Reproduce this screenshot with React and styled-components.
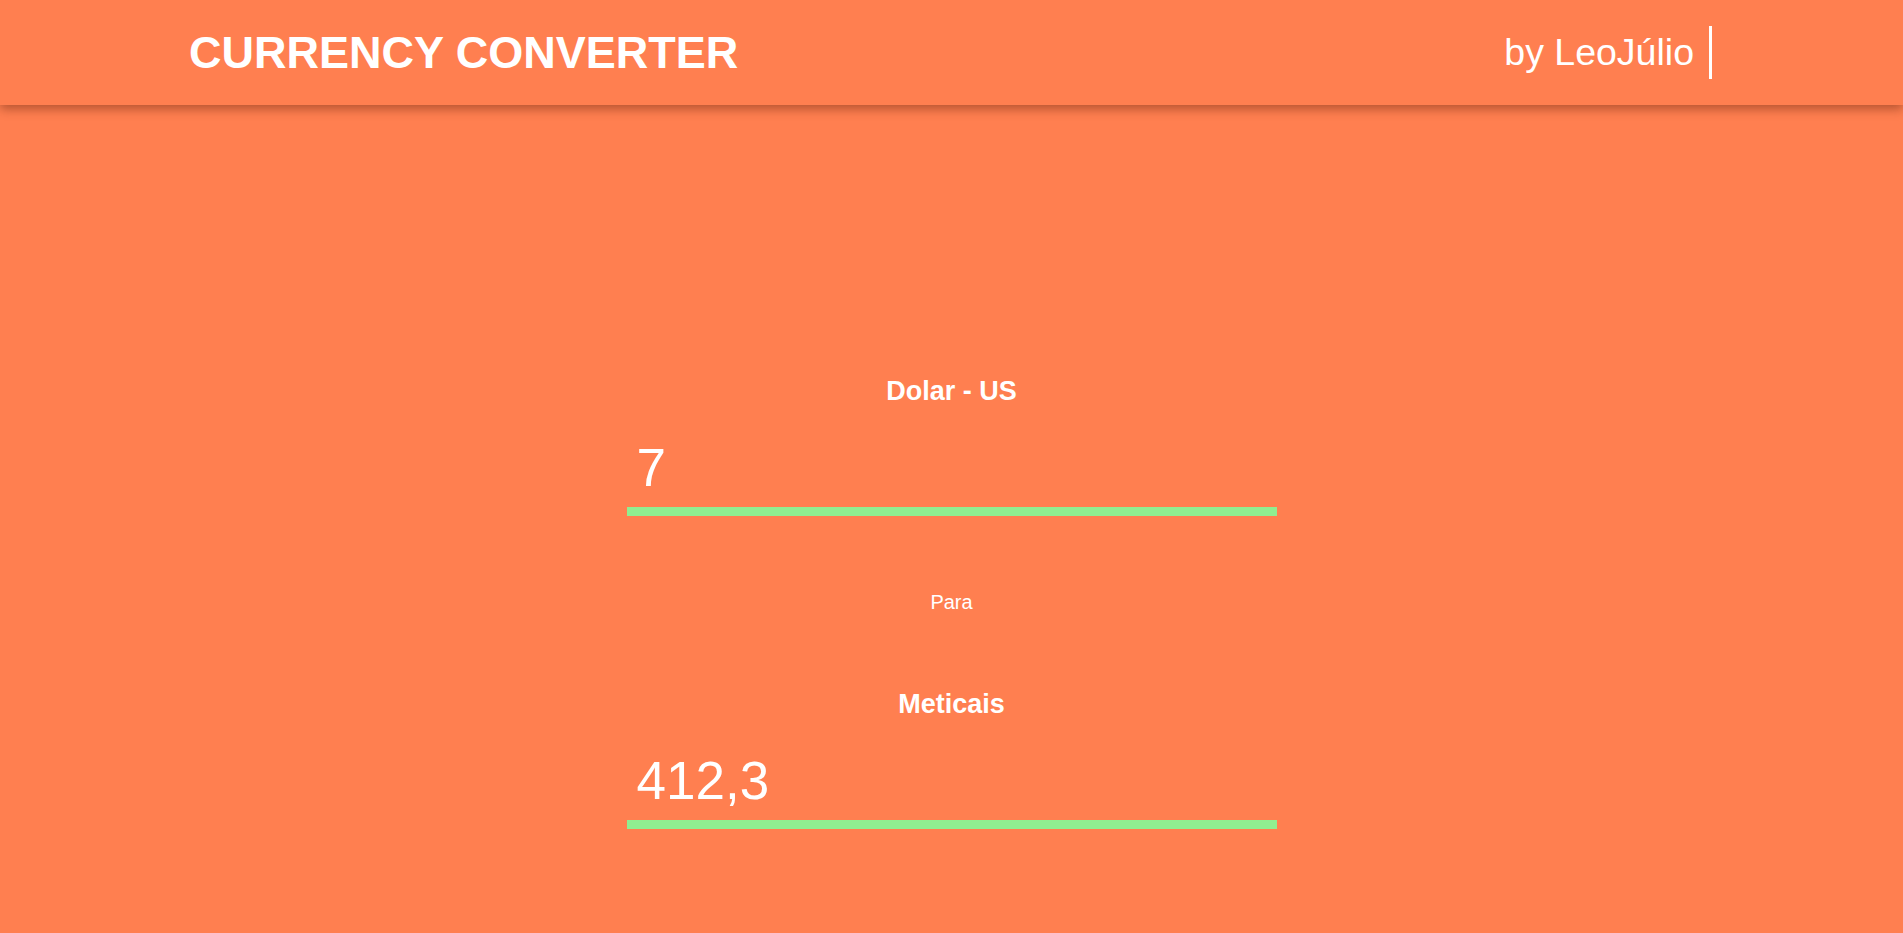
import React, { useState } from 'react';
import styled, { createGlobalStyle } from 'styled-components';

const Color = {
  coral: '#ff7f50',
  green: '#90ee90',
  white: '#ffffff',
};

const GlobalStyle = createGlobalStyle`
  html, body {
    margin: 0;
    padding: 0;
    background-color: ${Color.coral};
    overflow: hidden;
  }
  body {
    font-family: "Liberation Sans", Arial, sans-serif;
    color: ${Color.white};
  }
`;

export default function App() {
  const [dolar, setDolar] = useState('7');
  const rate = 58.9;
  const value = parseFloat(dolar.replace(',', '.'));
  const meticais = isNaN(value) ? '' : (value * rate).toFixed(1).replace('.', ',');

  return (
    <Page>
      <GlobalStyle />
      <Header>
        <Title>CURRENCY CONVERTER</Title>
        <Signature>by LeoJúlio</Signature>
      </Header>
      <Main>
        <Field>
          <Label>Dolar - US</Label>
          <Input value={dolar} onChange={e => setDolar(e.target.value)} />
        </Field>
        <Para>Para</Para>
        <Field>
          <Label>Meticais</Label>
          <Input value={meticais} readOnly />
        </Field>
      </Main>
    </Page>
  );
}

const Page = styled.div`
  min-height: 100vh;
  background-color: ${Color.coral};
`;

const Header = styled.header`
  display: flex;
  align-items: center;
  justify-content: space-between;
  height: 105px;
  padding: 0 191px 0 189px;
  background-color: ${Color.coral};
  box-shadow: 0 4px 10px rgba(90, 30, 10, 0.45);
  position: relative;
  z-index: 1;
`;

const Title = styled.h1`
  margin: 0;
  font-size: 45px;
  font-weight: 700;
  line-height: normal;
`;

const Signature = styled.span`
  padding-right: 15px;
  border-right: 3px solid ${Color.white};
  font-size: 37.5px;
  line-height: 53px;
`;

const Main = styled.main`
  display: flex;
  flex-direction: column;
  align-items: center;
  gap: 74px;
  padding-top: 270px;
`;

const Field = styled.div`
  display: flex;
  flex-direction: column;
  align-items: center;
  gap: 24px;
  width: 650px;
`;

const Label = styled.h2`
  margin: 0;
  font-size: 27px;
  font-weight: 700;
  line-height: 32px;
`;

const Input = styled.input`
  box-sizing: border-box;
  width: 100%;
  height: 85px;
  margin: 0;
  padding: 6px 10px 10px;
  border: 0;
  border-radius: 0;
  border-bottom: 9px solid ${Color.green};
  outline: none;
  background: transparent;
  color: ${Color.white};
  font-family: "Liberation Sans", Arial, sans-serif;
  font-size: 53px;
  line-height: 60px;
`;

const Para = styled.p`
  margin: 0;
  font-size: 20px;
  line-height: 24px;
`;
